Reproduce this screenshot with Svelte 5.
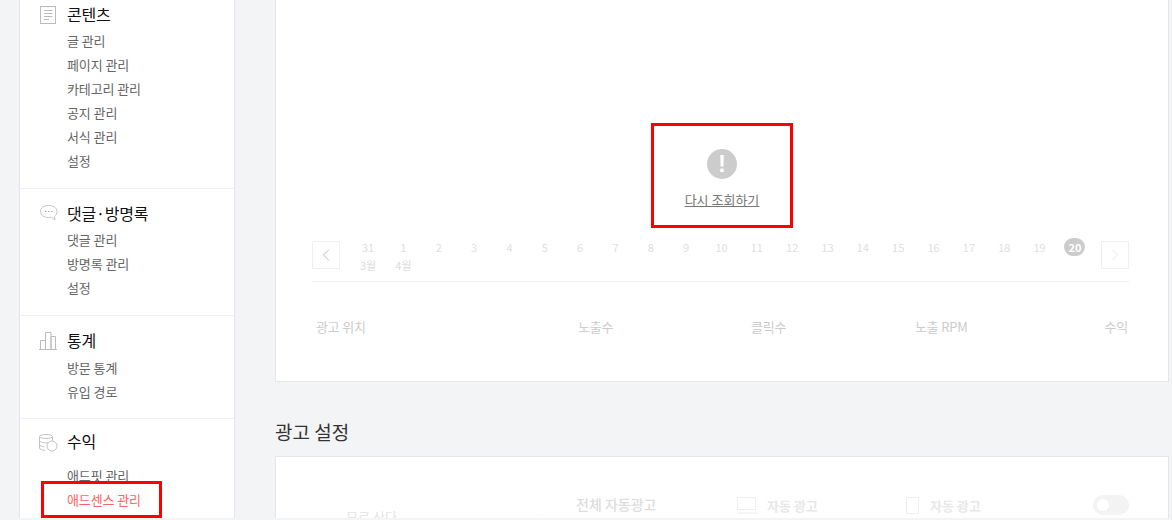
<script>
  const groups = [
    { title: "콘텐츠", icon: "doc", items: ["글 관리", "페이지 관리", "카테고리 관리", "공지 관리", "서식 관리", "설정"] },
    { title: "댓글·방명록", icon: "chat", items: ["댓글 관리", "방명록 관리", "설정"] },
    { title: "통계", icon: "chart", items: ["방문 통계", "유입 경로"] },
    { title: "수익", icon: "coin", items: ["애드핏 관리", "애드센스 관리"] }
  ];
  const days = [31, 1, 2, 3, 4, 5, 6, 7, 8, 9, 10, 11, 12, 13, 14, 15, 16, 17, 18, 19, 20];
</script>

<div class="page">
  <aside class="side">
    {#each groups as g}
      <section class="group {g.icon}">
        <h3>
          <span class="ico">
            {#if g.icon === "doc"}
              <svg width="17" height="19" viewBox="0 0 17 19" fill="none" stroke="#bbb">
                <rect x="0.5" y="0.5" width="15" height="17" />
                <path d="M4 4.500h8.500M4 7.500h8.500M4 10.500h8.500M4 13.500h5" />
              </svg>
            {:else if g.icon === "chat"}
              <svg width="18" height="16" viewBox="0 0 18 16" fill="none" stroke="#c4c4c4">
                <path d="M8.500.5C4 .5.500 2.800.500 6.500S4 12.500 8.500 12.500c1 0 2-.1 3-.4l3.500 2.900-.5-3.800c1.700-1.100 2.500-2.700 2.500-4.700C17 2.800 13 .5 8.500.5z" />
                <path d="M5 6.500h1.500M8 6.500h1.500M11 6.500h1.500" stroke="#aaa" />
              </svg>
            {:else if g.icon === "chart"}
              <svg width="18" height="18" viewBox="0 0 18 18" fill="none" stroke="#bbb">
                <path d="M0 17.500h18M1.500 17.500v-9h5v9M6.500 17.500V.5h5.500v17M12 17.500V4.500h4.500v13" />
              </svg>
            {:else}
              <svg width="19" height="18" viewBox="0 0 19 18" fill="none" stroke="#c4c4c4">
                <ellipse cx="7" cy="2.500" rx="6.500" ry="2" />
                <path d="M.5 2.500v11.500c0 1.300 2.500 2.200 5.500 2.300M.5 6.500c0 1.300 2.900 2.300 6.500 2.300s6.500-1 6.500-2.300M.5 10.500c0 1.200 2.300 2.100 5 2.300M13.500 2.500v4" />
                <circle cx="13" cy="12" r="5" fill="#fff" />
              </svg>
            {/if}
          </span>
          {g.title}
        </h3>
        <ul>
          {#each g.items as item}
            <li class:on={item === "애드센스 관리"}>{item}</li>
          {/each}
        </ul>
      </section>
    {/each}
    <div class="mark side-mark"></div>
  </aside>

  <main class="content">
    <div class="card report">
      <div class="retry">
        <span class="bang">!</span>
        <a href="#retry">다시 조회하기</a>
      </div>
      <div class="mark retry-mark"></div>
      <div class="dates">
        <button class="arrow" aria-label="이전">
          <svg width="8" height="12" viewBox="0 0 8 12" fill="none" stroke="#bbb"><path d="M7 .5L1.500 6 7 11.500" /></svg>
        </button>
        <div class="days">
          {#each days as d}
            <div class="day">
              <span class:today={d === 20}>{d}</span>
              {#if d === 31}<em>3월</em>{:else if d === 1}<em>4월</em>{/if}
            </div>
          {/each}
        </div>
        <button class="arrow next" aria-label="다음">
          <svg width="8" height="12" viewBox="0 0 8 12" fill="none" stroke="#e8e8e8"><path d="M1 .5L6.500 6 1 11.500" /></svg>
        </button>
      </div>
      <div class="thead">
        <span class="c1">광고 위치</span>
        <span class="c2">노출수</span>
        <span class="c3">클릭수</span>
        <span class="c4">노출 RPM</span>
        <span class="c5">수익</span>
      </div>
    </div>

    <h2>광고 설정</h2>

    <div class="card setting">
      <div class="place">모로 상다</div>
      <div class="opts">
        <strong class="all">전체 자동광고</strong>
        <span class="opt pc">
          <svg width="20" height="17" viewBox="0 0 20 17" fill="none" stroke="#eee"><rect x="0.500" y="0.500" width="18" height="12" /><path d="M0 16h20" /></svg>
          <b>자동 광고</b>
        </span>
        <span class="opt mo">
          <svg width="13" height="17" viewBox="0 0 13 17" fill="none" stroke="#eee"><rect x="0.500" y="0.500" width="12" height="16" /></svg>
          <b>자동 광고</b>
        </span>
        <span class="toggle"><i></i></span>
      </div>
    </div>
  </main>
</div>

<style>
  :global(body) {
    background: #f3f4f6;
  }
  .page {
    display: flex;
    height: 518px;
    overflow: hidden;
    position: relative;
    padding-left: 19px;
    font-family: "Noto Sans CJK KR", "Noto Sans", sans-serif;
    color: #333;
  }
  .side {
    width: 214px;
    flex: none;
    background: #fff;
    border-left: 1px solid #e4e6ec;
    border-right: 1px solid #e4e6ec;
  }
  .group {
    padding: 10px 0 15px;
    border-bottom: 1px solid #f1f1f3;
  }
  .group.doc {
    padding-top: 0;
  }
  .group.chart {
    padding-bottom: 14px;
  }
  .group.coin {
    padding-top: 8px;
    border-bottom: 0;
  }
  h3 {
    margin: 0;
    height: 28px;
    line-height: 28px;
    padding-left: 47px;
    font-size: 16px;
    font-weight: 400;
    letter-spacing: -0.2px;
    color: #111;
    position: relative;
  }
  .ico {
    position: absolute;
    left: 20px;
    top: 6px;
    display: block;
    line-height: 0;
  }
  .chart .ico {
    left: 19px;
  }
  .coin .ico {
    left: 19px;
    top: 7px;
  }
  ul {
    margin: 1px 0 0;
    padding: 0 0 0 47px;
    list-style: none;
  }
  .chart ul {
    margin-top: 2px;
  }
  .coin ul {
    margin-top: 9px;
  }
  li {
    height: 24px;
    line-height: 24px;
    font-size: 13px;
    letter-spacing: -0.1px;
    color: #666;
  }
  li.on {
    color: #ff6464;
  }
  .mark {
    position: absolute;
    border: 3px solid #f00;
    box-sizing: border-box;
    pointer-events: none;
  }
  .side-mark {
    left: 41px;
    top: 481px;
    width: 121px;
    height: 37px;
  }
  .retry-mark {
    left: 375px;
    top: 123px;
    width: 142px;
    height: 105px;
  }
  .content {
    width: 894px;
    margin-left: 40px;
    flex: none;
  }
  .card {
    background: #fff;
    border: 1px solid #e4e6ec;
    box-sizing: border-box;
    position: relative;
  }
  .report {
    border-top: 0;
    height: 382px;
    padding: 0 39px 0 36px;
  }
  .retry {
    position: absolute;
    left: 375px;
    top: 149px;
    width: 142px;
    display: flex;
    flex-direction: column;
    align-items: center;
    gap: 13px;
  }
  .bang {
    width: 30px;
    height: 30px;
    border-radius: 50%;
    background: #ccc;
    color: #fff;
    font-size: 24px;
    line-height: 30px;
    font-weight: 700;
    text-align: center;
    font-family: "Liberation Sans", sans-serif;
  }
  .retry a {
    font-size: 13px;
    line-height: 16px;
    color: #777;
  }
  .dates {
    position: relative;
    top: 241px;
    display: flex;
    justify-content: space-between;
    height: 41px;
    border-bottom: 1px solid #f3f3f3;
    box-sizing: border-box;
  }
  .arrow {
    width: 28px;
    height: 28px;
    background: #fff;
    border: 1px solid #efefef;
    padding: 0;
    display: flex;
    align-items: center;
    justify-content: center;
  }
  .days {
    display: flex;
    margin-top: -3px;
    padding-left: 2px;
  }
  .day {
    width: 35.35px;
    display: flex;
    flex-direction: column;
    align-items: center;
    font-size: 11px;
    line-height: 16px;
    color: #e0e0e0;
    flex: none;
  }
  .day span {
    height: 18px;
    line-height: 18px;
    min-width: 21px;
    text-align: center;
    border-radius: 9px;
  }
  .day span.today {
    background: #ccc;
    color: #fff;
    font-weight: 700;
  }
  .day em {
    font-style: normal;
    line-height: 18px;
    color: #dcdcdc;
  }
  .thead {
    position: relative;
    top: 276px;
    height: 20px;
    font-size: 13px;
    letter-spacing: -0.2px;
    line-height: 20px;
    color: #ccc;
  }
  .thead span {
    position: absolute;
    top: 0;
    white-space: nowrap;
  }
  .c1 { left: 4px; }
  .c2 { left: 266px; }
  .c3 { left: 439px; }
  .c4 { left: 603px; }
  .c5 { right: 1px; }
  h2 {
    margin: 36px 0 11px;
    height: 27px;
    line-height: 27px;
    font-size: 19px;
    font-weight: 400;
    color: #333;
  }
  .setting {
    height: 80px;
    display: flex;
    border-bottom: 0;
  }
  .place {
    width: 264px;
    flex: none;
    border-right: 1px solid #fbfbfb;
    padding: 52px 72px 0 0;
    text-align: center;
    font-size: 13px;
    line-height: 16px;
    color: #e4e4e4;
    box-sizing: border-box;
  }
  .opts {
    position: relative;
    flex: 1;
  }
  .all {
    position: absolute;
    left: 36px;
    top: 36px;
    font-size: 14px;
    line-height: 22px;
    font-weight: 500;
    color: #ddd;
  }
  .opt {
    position: absolute;
    top: 39px;
    display: flex;
    align-items: center;
    gap: 10px;
    font-size: 13px;
    color: #e8e8e8;
  }
  .opt b {
    font-weight: 700;
  }
  .pc { left: 197px; }
  .mo { left: 366px; gap: 11px; }
  .toggle {
    position: absolute;
    left: 553px;
    top: 38px;
    width: 36px;
    height: 20px;
    border-radius: 10px;
    background: #f3f3f3;
  }
  .toggle i {
    position: absolute;
    left: 4px;
    top: 4px;
    width: 12px;
    height: 12px;
    border-radius: 50%;
    background: #fff;
  }
</style>
